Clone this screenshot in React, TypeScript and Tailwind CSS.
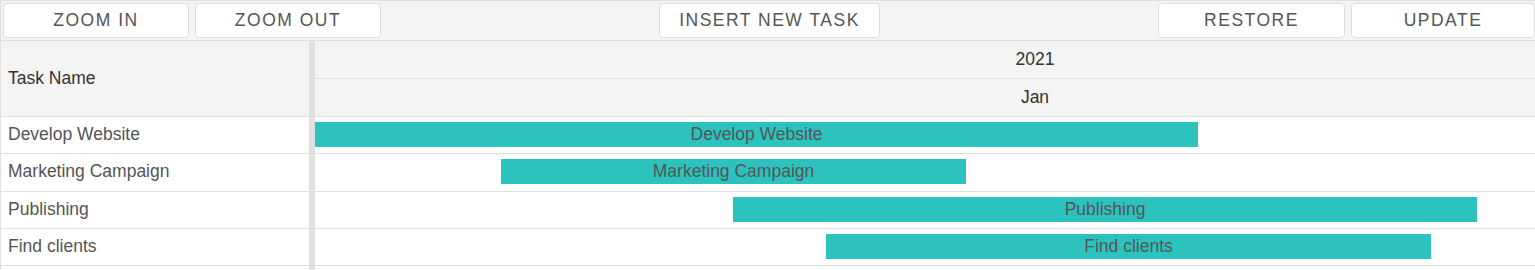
const tasks = [
  { name: "Develop Website", left: "ml-[0px]", width: "w-[883px]" },
  { name: "Marketing Campaign", left: "ml-[186px]", width: "w-[465px]" },
  { name: "Publishing", left: "ml-[418px]", width: "w-[744px]" },
  { name: "Find clients", left: "ml-[511px]", width: "w-[605px]" },
];

function ToolButton({ label, width }: { label: string; width: string }) {
  return (
    <button
      className={`${width} h-[35px] shrink-0 rounded-[4px] border border-[#dddddd] bg-white text-[17.5px] uppercase tracking-[1.5px] text-[#555555]`}
    >
      {label}
    </button>
  );
}

export default function App() {
  return (
    <div className="h-[270px] w-[1535px] overflow-hidden bg-white font-['Liberation_Sans',Arial,sans-serif]">
      <div className="border-l border-t border-[#e0e0e0]">
        <div className="flex h-[40px] items-center border-b border-[#e0e0e0] bg-[#f4f4f4] pl-[2px]">
          <div className="flex gap-[6px]">
            <ToolButton label="Zoom In" width="w-[186px]" />
            <ToolButton label="Zoom Out" width="w-[186px]" />
          </div>
          <div className="flex flex-1 justify-center">
            <ToolButton label="Insert New Task" width="w-[221px]" />
          </div>
          <div className="flex gap-[6px]">
            <ToolButton label="Restore" width="w-[187px]" />
            <ToolButton label="Update" width="w-[184px]" />
          </div>
        </div>

        <div className="flex">
          <div className="w-[308px] shrink-0">
            <div className="flex h-[76px] items-center border-b border-[#e0e0e0] bg-[#f4f4f4] px-[7px] text-[17.5px] text-[#333333]">
              Task Name
            </div>
            {tasks.map((t) => (
              <div
                key={t.name}
                className="flex h-[37.25px] items-center border-b border-[#e0e0e0] px-[7px] pb-[2px] text-[17.5px] text-[#555555]"
              >
                {t.name}
              </div>
            ))}
            <div className="h-[20px]" />
          </div>

          <div className="w-[6px] shrink-0 bg-[#e0e0e0]" />

          <div className="w-[1440px] shrink-0">
            <div className="h-[76px] border-b border-[#e0e0e0] bg-[#f4f4f4] text-[17.5px] text-[#333333]">
              <div className="flex h-[38px] items-center justify-center border-b border-[#e0e0e0]">
                2021
              </div>
              <div className="flex h-[37px] items-center justify-center">Jan</div>
            </div>
            {tasks.map((t) => (
              <div
                key={t.name}
                className="flex h-[37.25px] items-center border-b border-[#e0e0e0] pb-[1px]"
              >
                <div
                  className={`${t.left} ${t.width} flex h-[25px] items-center justify-center bg-[#2cc3be] pb-[1px] text-[17.5px] text-[#555555]`}
                >
                  {t.name}
                </div>
              </div>
            ))}
          </div>
        </div>
      </div>
    </div>
  );
}
